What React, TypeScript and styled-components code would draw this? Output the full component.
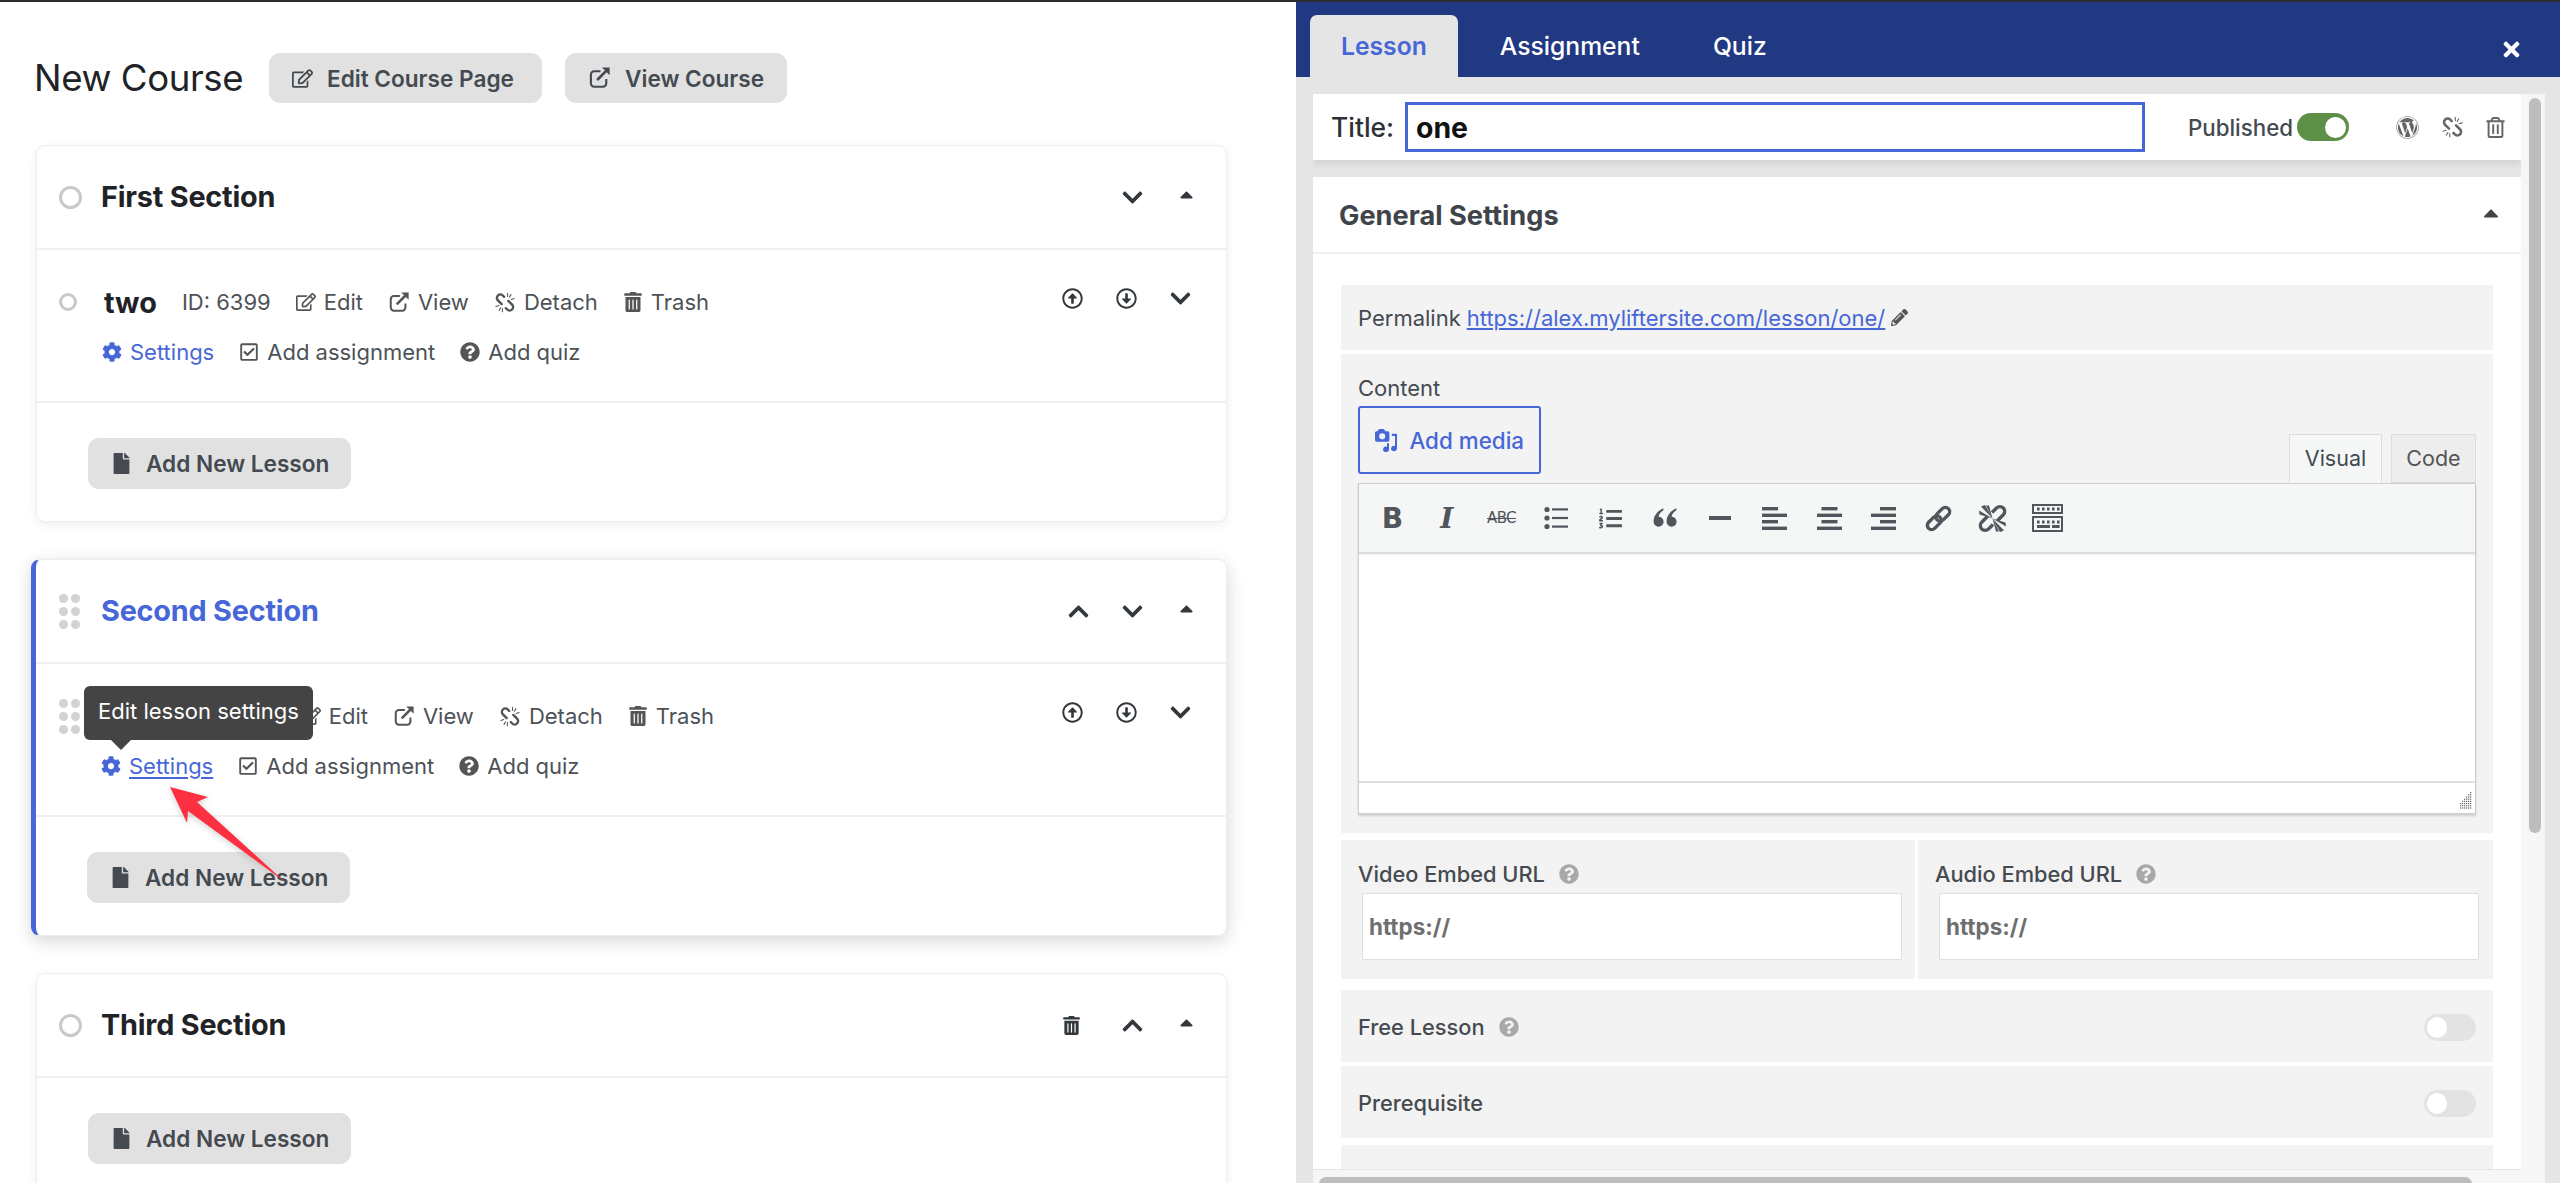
import React from "react";
import styled, { createGlobalStyle } from "styled-components";
import {
  FaRegEdit, FaTrashAlt, FaCog, FaRegCheckSquare, FaQuestionCircle, FaFile,
  FaRegArrowAltCircleUp, FaRegArrowAltCircleDown, FaChevronUp, FaChevronDown, FaCaretUp,
  FaTimes, FaWordpress, FaRegTrashAlt, FaPencilAlt, FaListOl,
} from "react-icons/fa";

const Blue = "#4767d8";
const Ink = "#444a50";

const Global = createGlobalStyle`
  html, body { margin: 0; padding: 0; background: #fff; }
  body { font-family: Inter, "Liberation Sans", sans-serif; color: ${Ink}; overflow: hidden; }
  * { box-sizing: border-box; }
`;

const Page = styled.div`
  display: flex;
  width: 2560px;
  height: 1183px;
  overflow: hidden;
  border-top: 2px solid #2b2d33;
`;

const LeftColumn = styled.main`
  width: 1296px;
  padding: 51px 69px 0 36px;
  background: #fff;
`;

const TopRow = styled.header`
  display: flex;
  align-items: center;
  height: 50px;
  margin-bottom: 42px;
`;

const PageTitle = styled.h1`
  flex: none;
  width: 235px;
  margin: 0 0 0 -2px;
  font-size: 36.6px;
  font-weight: 400;
  letter-spacing: -0.4px;
  color: #1f2328;
  white-space: nowrap;
`;

const GreyButton = styled.button<{ $w: number; $h?: number }>`
  display: inline-flex;
  align-items: center;
  gap: 14px;
  width: ${(p) => p.$w}px;
  height: ${(p) => p.$h ?? 50}px;
  padding: 0 23px;
  margin-right: 23px;
  border: 0;
  border-radius: 11px;
  background: #e1e1e1;
  color: ${Ink};
  font: 600 22.6px Inter, sans-serif;
  white-space: nowrap;
  svg { flex: none; font-size: 21px; }
`;

const Card = styled.section<{ $active?: boolean }>`
  position: relative;
  margin-bottom: 37px;
  margin-left: ${(p) => (p.$active ? "-5px" : "0")};
  border: 1px solid #eeeeee;
  border-left: ${(p) => (p.$active ? `5px solid ${Blue}` : "1px solid #eeeeee")};
  border-radius: 9px;
  background: #fff;
  box-shadow: ${(p) => (p.$active ? "0 5px 18px rgba(0,0,0,.16)" : "0 3px 10px rgba(0,0,0,.07)")};
`;

const SectionHead = styled.div`
  display: flex;
  align-items: center;
  height: 104px;
  padding: 0 13px 0 22px;
  border-bottom: 2px solid #f0f0f0;
`;

const Ring = styled.span<{ $size: number }>`
  flex: none;
  width: ${(p) => p.$size}px;
  height: ${(p) => p.$size}px;
  border: 3px solid #c9c9c9;
  border-radius: 50%;
`;

const Dots = styled.span`
  flex: none;
  display: grid;
  grid-template-columns: 9px 9px;
  gap: 4px 3px;
  margin: 0 2px 0 1px;
  i { width: 9px; height: 9px; border-radius: 50%; background: #d2d2d2; }
`;

const SectionTitle = styled.h2<{ $blue?: boolean }>`
  margin: -2px 0 0 19px;
  font-size: 28.8px;
  font-weight: 700;
  letter-spacing: -0.2px;
  color: ${(p) => (p.$blue ? Blue : "#1f2328")};
`;

const Spacer = styled.span`
  flex: 1;
`;

const IconSlot = styled.span<{ $size?: number; $color?: string; $w?: number }>`
  flex: none;
  display: flex;
  align-items: center;
  justify-content: center;
  width: ${(p) => p.$w ?? 54}px;
  font-size: ${(p) => p.$size ?? 21}px;
  color: ${(p) => p.$color ?? "#33383d"};
`;

const Caret = styled(FaCaretUp)`
  margin-top: -5px;
`;

const LessonBlock = styled.div`
  position: relative;
  height: 153px;
  padding: 37px 19px 0 22px;
  border-bottom: 2px solid #f0f0f0;
`;

const LessonRow = styled.div`
  display: flex;
  align-items: center;
  height: 30px;
`;

const LessonName = styled.strong`
  margin: 0 25px 0 27px;
  font-size: 28.8px;
  font-weight: 700;
  color: #1f2328;
`;

const MetaText = styled.span`
  margin-right: 25px;
  font-size: 22px;
  color: #4d5257;
  white-space: nowrap;
`;

const ActionLink = styled.a<{ $blue?: boolean; $under?: boolean }>`
  display: inline-flex;
  align-items: center;
  gap: 8px;
  margin-right: 25px;
  font-size: 22px;
  color: ${(p) => (p.$blue ? Blue : "#4d5257")};
  white-space: nowrap;
  svg { flex: none; font-size: 20px; color: ${(p) => (p.$blue ? Blue : "#555")}; }
  span { text-decoration: ${(p) => (p.$under ? "underline" : "none")}; text-underline-offset: 3px; }
`;

const SubRow = styled(LessonRow)`
  margin-top: 20px;
  padding-left: 43px;
`;

const RowIcons = styled.div`
  display: flex;
  margin-top: -8px;
`;

const CardFoot = styled.div`
  height: 118px;
  padding: 35px 0 0 51px;
`;

const Tooltip = styled.div`
  position: absolute;
  top: 22px;
  left: 48px;
  width: 229px;
  height: 54px;
  border-radius: 6px;
  background: #444444;
  color: #fff;
  font-size: 22px;
  line-height: 50px;
  text-align: center;
  white-space: nowrap;
  &::after {
    content: "";
    position: absolute;
    left: 27px;
    top: 54px;
    border: 10px solid transparent;
    border-top-color: #444444;
    border-bottom: 0;
  }
`;

const ArrowMark = styled.svg`
  position: absolute;
  left: 64px;
  top: 200px;
  width: 200px;
  height: 140px;
  overflow: visible;
  filter: drop-shadow(0 2px 3px rgba(0,0,0,.18));
`;

const RightPanel = styled.aside`
  flex: 1;
  display: flex;
  flex-direction: column;
  background: #e5e5e5;
`;

const TabBar = styled.nav`
  flex: none;
  display: flex;
  align-items: flex-end;
  gap: 11px;
  height: 75px;
  padding: 0 37px 0 14px;
  background: #213982;
`;

const Tab = styled.div<{ $on?: boolean }>`
  height: 62px;
  padding: 0 31px;
  border-radius: 7px 7px 0 0;
  background: ${(p) => (p.$on ? "#e5e5e5" : "transparent")};
  color: ${(p) => (p.$on ? Blue : "#fff")};
  font-size: 24.7px;
  font-weight: ${(p) => (p.$on ? 600 : 500)};
  line-height: 62px;
`;

const CloseButton = styled.span`
  margin-left: auto;
  align-self: center;
  display: flex;
  margin-top: 20px;
  color: #fff;
  font-size: 23px;
`;

const PanelBody = styled.div`
  flex: 1;
  display: grid;
  grid-template-columns: 1208px 24px;
  grid-template-rows: 1075px 14px;
  padding: 17px 0 0 17px;
  min-height: 0;
`;

const MainStack = styled.div`
  overflow: hidden;
`;

const TitleBar = styled.div`
  display: flex;
  align-items: center;
  height: 66px;
  padding: 0 12px 0 18px;
  background: #fff;
  box-shadow: 0 3px 8px rgba(0,0,0,.1);
`;

const TitleLabel = styled.label`
  flex: none;
  width: 74px;
  font-size: 26.4px;
  font-weight: 500;
  color: #2d3136;
`;

const TitleInput = styled.input`
  flex: none;
  width: 740px;
  height: 50px;
  padding: 0 8px;
  border: 3px solid ${Blue};
  outline: 0;
  background: #fff;
  font: 700 28.4px Inter, sans-serif;
  color: #111;
`;

const PublishedLabel = styled.span`
  margin-left: 43px;
  margin-right: 4px;
  font-size: 22.3px;
  font-weight: 500;
`;

const Toggle = styled.span<{ $on?: boolean }>`
  flex: none;
  display: flex;
  align-items: center;
  justify-content: ${(p) => (p.$on ? "flex-end" : "flex-start")};
  width: 52px;
  height: ${(p) => (p.$on ? 28 : 27)}px;
  padding: 3px;
  border-radius: 14px;
  background: ${(p) => (p.$on ? "#5d8f47" : "#e3e3e3")};
  i { display: block; height: 21px; width: ${(p) => (p.$on ? 21 : 20)}px; border-radius: 50%; background: #fff; }
`;

const TitleIcons = styled.div`
  display: flex;
  align-items: center;
  margin-left: auto;
  color: #666;
`;

const Settings = styled.div`
  height: 992px;
  margin-top: 17px;
  background: #fff;
`;

const SettingsHead = styled.div`
  display: flex;
  align-items: center;
  justify-content: space-between;
  height: 77px;
  padding: 2px 18px 0 26px;
  border-bottom: 2px solid #efefef;
  font-size: 27.2px;
  font-weight: 700;
  color: #3f444a;
  svg { font-size: 24px; color: #444; }
`;

const SettingsRows = styled.div`
  padding: 31px 28px 0;
`;

const Row = styled.div<{ $h: number; $top?: number }>`
  height: ${(p) => p.$h}px;
  margin-top: ${(p) => p.$top ?? 0}px;
  background: #f3f3f3;
`;

const PermalinkRow = styled(Row)`
  display: flex;
  align-items: center;
  gap: 6px;
  padding: 0 17px;
  font-size: 22px;
  a { color: ${Blue}; text-decoration: underline; text-underline-offset: 2px; }
  svg { font-size: 17px; color: #555; }
`;

const ContentRow = styled(Row)`
  padding: 21px 17px 0;
  font-size: 22px;
`;

const EditorTop = styled.div`
  display: flex;
  align-items: flex-end;
  justify-content: space-between;
  height: 68px;
  margin-top: 5px;
`;

const MediaButton = styled.button`
  display: inline-flex;
  align-items: center;
  gap: 12px;
  width: 183px;
  height: 68px;
  padding: 0 15px;
  border: 2px solid ${Blue};
  border-radius: 3px;
  background: transparent;
  color: ${Blue};
  font: 500 22.4px Inter, sans-serif;
  white-space: nowrap;
`;

const ModeTabs = styled.div`
  display: flex;
  gap: 9px;
  margin-bottom: -9px;
  position: relative;
  z-index: 1;
`;

const ModeTab = styled.span<{ $on?: boolean; $w: number }>`
  width: ${(p) => p.$w}px;
  height: 49px;
  border: 1px solid #dcdcdc;
  border-bottom: ${(p) => (p.$on ? "1px solid #f5f7f7" : "1px solid #dcdcdc")};
  background: ${(p) => (p.$on ? "#f5f7f7" : "#ededed")};
  font-size: 21.5px;
  line-height: 47px;
  text-align: center;
  color: ${(p) => (p.$on ? Ink : "#555")};
`;

const Editor = styled.div`
  margin-top: 9px;
  border: 1px solid #cfcfcf;
  background: #fff;
  box-shadow: 0 2px 2px rgba(0,0,0,.15);
`;

const Toolbar = styled.div`
  display: flex;
  align-items: center;
  height: 70px;
  padding-left: 6px;
  background: #f5f7f7;
  border-bottom: 2px solid #dddddd;
  box-shadow: 0 1px 2px rgba(0,0,0,.08);
`;

const ToolButton = styled.span`
  flex: none;
  display: flex;
  align-items: center;
  justify-content: center;
  width: 54.6px;
  color: #50565c;
  font-size: 23px;
`;

const BoldGlyph = styled.b`
  font: 700 28px "DejaVu Sans", sans-serif;
`;
const ItalicGlyph = styled.i`
  font: italic 700 28px "DejaVu Serif", serif;
`;
const StrikeGlyph = styled.s`
  font: 400 15px "DejaVu Sans", sans-serif;
  letter-spacing: -0.6px;
`;

const EditArea = styled.div`
  height: 229px;
  border-bottom: 2px solid #dfdfdf;
`;

const StatusBar = styled.div`
  display: flex;
  align-items: flex-end;
  justify-content: flex-end;
  height: 30px;
  padding: 0 3px 4px 0;
`;

const SplitRow = styled.div`
  display: grid;
  grid-template-columns: 574px 575px;
  gap: 3px;
  margin-top: 7px;
`;

const EmbedCell = styled.div`
  height: 139px;
  padding: 22px 14px 0 17px;
  background: #f3f3f3;
`;

const FieldLabel = styled.div`
  display: flex;
  align-items: center;
  gap: 14px;
  height: 24px;
  font-size: 21.8px;
  font-weight: 500;
  color: #454a50;
  svg { font-size: 20px; color: #a8a8a8; }
`;

const UrlInput = styled.input`
  display: block;
  width: 540px;
  height: 67px;
  margin: 7px 0 0 4px;
  padding: 0 6px;
  border: 1px solid #dedede;
  border-radius: 2px;
  background: #fff;
  outline: 0;
  font: 700 22.4px Inter, sans-serif;
  color: #6f6f6f;
`;

const SwitchRow = styled(Row)`
  display: flex;
  align-items: center;
  justify-content: space-between;
  padding: 2px 17px 0;
`;

const HScrollTrack = styled.div`
  grid-column: 1 / 2;
  padding: 7px 49px 0 6px;
  background: #f6f6f6;
  border-top: 1px solid #e4e4e4;
`;

const HThumb = styled.div`
  height: 7px;
  border-radius: 7px 7px 0 0;
  background: #bdbdbd;
`;

const VScrollTrack = styled.div`
  grid-row: 1 / 3;
  grid-column: 2;
  padding: 4px 4px 0 8px;
  background: #f6f6f6;
`;

const VThumb = styled.div`
  height: 735px;
  border-radius: 6px;
  background: #bdbdbd;
`;

/* Font Awesome 4 style outline link-out icon */
function LinkOut() {
  return (
    <svg width="1.1em" height="1.1em" viewBox="0 0 24 24" fill="none" stroke="currentColor" strokeWidth="2.2">
      <path d="M13 5.5H6.5a3.5 3.5 0 0 0-3.5 3.5v9a3.5 3.5 0 0 0 3.5 3.5h9a3.5 3.5 0 0 0 3.5-3.5v-4.5" />
      <path d="M9.5 14.5 21 3" strokeWidth="2.8" />
      <path d="M14.5 1.5h8v8z" fill="currentColor" stroke="none" />
    </svg>
  );
}

/* chain-broken: the two halves run top-left to bottom-right, sparks on the other diagonal */
function ChainBroken() {
  return (
    <svg width="1.1em" height="1.05em" viewBox="0 0 24 24" fill="none" stroke="currentColor" strokeLinecap="round">
      <path d="M11 5.5 9.5 4a4 4 0 0 0-5.6 0 4 4 0 0 0 0 5.6l4.3 4.2" strokeWidth="2.8" />
      <path d="M13 18.5l1.5 1.5a4 4 0 0 0 5.6 0 4 4 0 0 0 0-5.6l-4.3-4.2" strokeWidth="2.8" />
      <path d="M15 1.5v3.5M18.8 3 17 6M22.5 7.5l-3.5 1M9 22.5V19M5.2 21 7 18M1.5 16.5l3.5-1" strokeWidth="1.2" />
    </svg>
  );
}

function EditorLink() {
  return (
    <svg width="29" height="29" viewBox="0 0 29 29" fill="none" stroke="currentColor" strokeWidth="3.4">
      <g transform="rotate(-45 14.5 14.5)">
        <rect x="0.5" y="10.2" width="16" height="8.6" rx="4.3" />
        <rect x="12.5" y="10.2" width="16" height="8.6" rx="4.3" />
      </g>
    </svg>
  );
}

function EditorUnlink() {
  return (
    <svg width="29" height="29" viewBox="0 0 29 29" fill="none" stroke="currentColor">
      <path d="M14 8.5 18.5 4a5 5 0 0 1 6.8 0 5 5 0 0 1 0 6.8l-6 6" strokeWidth="3.4" />
      <path d="M15 20.5 10.5 25a5 5 0 0 1-6.8 0 5 5 0 0 1 0-6.8l6-6" strokeWidth="3.4" />
      <path d="M14.5 14.5 3 2.5 7 1zM14.5 14.5 1 6.5l.5 4zM14.5 14.5 8 1.5l3 0zM14.5 14.5 26 26.5l-4 1.5zM14.5 14.5 28 22.5l-.5-4zM14.5 14.5l6.5 13-3 0z" fill="currentColor" stroke="none" />
    </svg>
  );
}

function QuoteMark() {
  return (
    <svg width="26" height="23" viewBox="0 0 24 21" fill="currentColor">
      <path d="M10.5 1C5.5 3.5 1.5 7 1.5 13.5a4.6 4.6 0 1 0 4.6-4.6c.3-2.6 2.2-4.8 4.4-6zM22.5 1c-5 2.5-9 6-9 12.5a4.6 4.6 0 1 0 4.6-4.6c.3-2.6 2.2-4.8 4.4-6z" />
    </svg>
  );
}

function DragDots() {
  return (
    <Dots>
      <i /><i /><i /><i /><i /><i />
    </Dots>
  );
}

function Lesson({ dragging }: { dragging?: boolean }) {
  return (
    <LessonBlock>
      <LessonRow>
        {dragging ? <DragDots /> : <Ring $size={18} />}
        <LessonName>two</LessonName>
        <MetaText>ID: 6399</MetaText>
        <ActionLink><FaRegEdit /><span>Edit</span></ActionLink>
        <ActionLink><LinkOut /><span>View</span></ActionLink>
        <ActionLink><ChainBroken /><span>Detach</span></ActionLink>
        <ActionLink><FaTrashAlt /><span>Trash</span></ActionLink>
        <Spacer />
        <RowIcons>
          <IconSlot><FaRegArrowAltCircleUp /></IconSlot>
          <IconSlot><FaRegArrowAltCircleDown /></IconSlot>
          <IconSlot $size={23}><FaChevronDown /></IconSlot>
        </RowIcons>
      </LessonRow>
      <SubRow>
        <ActionLink $blue $under={dragging}><FaCog /><span>Settings</span></ActionLink>
        <ActionLink><FaRegCheckSquare /><span>Add assignment</span></ActionLink>
        <ActionLink><FaQuestionCircle /><span>Add quiz</span></ActionLink>
      </SubRow>
      {dragging && <Tooltip>Edit lesson settings</Tooltip>}
    </LessonBlock>
  );
}

function AddLesson() {
  return (
    <CardFoot>
      <GreyButton $w={263} $h={51}><FaFile />Add New Lesson</GreyButton>
    </CardFoot>
  );
}

function Bars({ align }: { align: "l" | "c" | "r" }) {
  const x = (w: number) => (align === "l" ? 0 : align === "c" ? (25 - w) / 2 : 25 - w);
  return (
    <svg width="25" height="25" viewBox="0 0 25 25" fill="currentColor">
      <rect x={x(16)} y="1" width="16" height="3.4" />
      <rect x={x(25)} y="7.6" width="25" height="3.4" />
      <rect x={x(16)} y="14" width="16" height="3.4" />
      <rect x={x(25)} y="20.6" width="25" height="3.4" />
    </svg>
  );
}

function BulletList() {
  return (
    <svg width="24" height="24" viewBox="0 0 24 24" fill="currentColor">
      <circle cx="3" cy="3.5" r="2.6" /><rect x="8" y="2.3" width="16" height="2.2" />
      <circle cx="3" cy="12" r="2.6" /><rect x="8" y="10.9" width="16" height="2.2" />
      <circle cx="3" cy="20.5" r="2.6" /><rect x="8" y="19.5" width="16" height="2.2" />
    </svg>
  );
}

function KitchenSink() {
  const cells = (y: number) =>
    [5, 10, 15, 20, 25].map((x) => <rect key={`${x}-${y}`} x={x} y={y} width="2.6" height="3" />);
  return (
    <svg width="31" height="28" viewBox="0 0 31 28" fill="currentColor">
      <path fillRule="evenodd" d="M0 0h31v10H0zM2 2v6h27V2z" />
      <path fillRule="evenodd" d="M0 12h31v16H0zM2 14v12h27V14z" />
      {cells(3.5)}
      {cells(16.5)}
      <rect x="5" y="21" width="13" height="3" />
      <rect x="20" y="21" width="7.6" height="3" />
    </svg>
  );
}

function MediaIcon() {
  return (
    <svg width="28" height="29" viewBox="0 0 28 29" fill={Blue}>
      <path fillRule="evenodd" d="M5 0h6l2 3h3A2 2 0 0 1 18 5v9a2 2 0 0 1-2 2H2a2 2 0 0 1-2-2V5a2 2 0 0 1 2-2h1zM9 5.5a3.8 3.8 0 1 0 0 7.6 3.8 3.8 0 0 0 0-7.6z" />
      <path d="M21 6h6.5v18.5a3.7 3.4 0 1 1-2.5-3.2V9H21z" />
      <path d="M15 18h2.5v7.5a3.7 3.4 0 1 1-2.5-3.2z" />
    </svg>
  );
}

function ResizeGrip() {
  const dots: React.ReactNode[] = [];
  [[10], [8, 10], [6, 8, 10], [4, 6, 8, 10], [2, 4, 6, 8, 10], [0, 2, 4, 6, 8, 10], [0, 2, 4, 6, 8, 10], [0, 2, 4, 6, 8, 10]].forEach((xs, r) =>
    xs.forEach((x) => dots.push(<rect key={`${r}-${x}`} x={x} y={r * 2.2} width="1.2" height="1.2" />))
  );
  return (
    <svg width="12" height="17" viewBox="0 0 12 17" fill="#666">
      {dots}
    </svg>
  );
}

export default function App() {
  return (
    <>
      <Global />
      <Page>
        <LeftColumn>
          <TopRow>
            <PageTitle>New Course</PageTitle>
            <GreyButton $w={273}><FaRegEdit />Edit Course Page</GreyButton>
            <GreyButton $w={222}><LinkOut />View Course</GreyButton>
          </TopRow>

          <Card>
            <SectionHead>
              <Ring $size={23} />
              <SectionTitle>First Section</SectionTitle>
              <Spacer />
              <IconSlot $size={23}><FaChevronDown /></IconSlot>
              <IconSlot><Caret /></IconSlot>
            </SectionHead>
            <Lesson />
            <AddLesson />
          </Card>

          <Card $active>
            <SectionHead>
              <DragDots />
              <SectionTitle $blue>Second Section</SectionTitle>
              <Spacer />
              <IconSlot $size={23}><FaChevronUp /></IconSlot>
              <IconSlot $size={23}><FaChevronDown /></IconSlot>
              <IconSlot><Caret /></IconSlot>
            </SectionHead>
            <Lesson dragging />
            <AddLesson />
            <ArrowMark viewBox="0 0 200 140">
              <polygon points="70,27 108,37 97,42 185,122 88,51 87,63" fill="#fc3040" />
            </ArrowMark>
          </Card>

          <Card>
            <SectionHead>
              <Ring $size={23} />
              <SectionTitle>Third Section</SectionTitle>
              <Spacer />
              <IconSlot $size={19} $w={68}><FaTrashAlt /></IconSlot>
              <IconSlot $size={23}><FaChevronUp /></IconSlot>
              <IconSlot><Caret /></IconSlot>
            </SectionHead>
            <AddLesson />
          </Card>
        </LeftColumn>

        <RightPanel>
          <TabBar>
            <Tab $on>Lesson</Tab>
            <Tab>Assignment</Tab>
            <Tab>Quiz</Tab>
            <CloseButton><FaTimes /></CloseButton>
          </TabBar>
          <PanelBody>
            <MainStack>
              <TitleBar>
                <TitleLabel>Title:</TitleLabel>
                <TitleInput defaultValue="one" />
                <PublishedLabel>Published</PublishedLabel>
                <Toggle $on><i /></Toggle>
                <TitleIcons>
                  <IconSlot $w={36} $size={23} $color="#666"><FaWordpress /></IconSlot>
                  <IconSlot $w={56} $color="#666"><ChainBroken /></IconSlot>
                  <IconSlot $w={28} $color="#666"><FaRegTrashAlt /></IconSlot>
                </TitleIcons>
              </TitleBar>
              <Settings>
                <SettingsHead>General Settings<Caret /></SettingsHead>
                <SettingsRows>
                  <PermalinkRow $h={65}>
                    Permalink <a>https://alex.myliftersite.com/lesson/one/</a>
                    <FaPencilAlt />
                  </PermalinkRow>
                  <ContentRow $h={479} $top={4}>
                    Content
                    <EditorTop>
                      <MediaButton><MediaIcon />Add media</MediaButton>
                      <ModeTabs>
                        <ModeTab $on $w={93}>Visual</ModeTab>
                        <ModeTab $w={85}>Code</ModeTab>
                      </ModeTabs>
                    </EditorTop>
                    <Editor>
                      <Toolbar>
                        <ToolButton><BoldGlyph>B</BoldGlyph></ToolButton>
                        <ToolButton><ItalicGlyph>I</ItalicGlyph></ToolButton>
                        <ToolButton><StrikeGlyph>ABC</StrikeGlyph></ToolButton>
                        <ToolButton><BulletList /></ToolButton>
                        <ToolButton><FaListOl /></ToolButton>
                        <ToolButton><QuoteMark /></ToolButton>
                        <ToolButton>
                          <svg width="22" height="4" viewBox="0 0 22 4" fill="currentColor"><rect width="22" height="4" /></svg>
                        </ToolButton>
                        <ToolButton><Bars align="l" /></ToolButton>
                        <ToolButton><Bars align="c" /></ToolButton>
                        <ToolButton><Bars align="r" /></ToolButton>
                        <ToolButton><EditorLink /></ToolButton>
                        <ToolButton><EditorUnlink /></ToolButton>
                        <ToolButton><KitchenSink /></ToolButton>
                      </Toolbar>
                      <EditArea />
                      <StatusBar><ResizeGrip /></StatusBar>
                    </Editor>
                  </ContentRow>
                  <SplitRow>
                    <EmbedCell>
                      <FieldLabel>Video Embed URL <FaQuestionCircle /></FieldLabel>
                      <UrlInput defaultValue="https://" />
                    </EmbedCell>
                    <EmbedCell>
                      <FieldLabel>Audio Embed URL <FaQuestionCircle /></FieldLabel>
                      <UrlInput defaultValue="https://" />
                    </EmbedCell>
                  </SplitRow>
                  <SwitchRow $h={72} $top={11}>
                    <FieldLabel>Free Lesson <FaQuestionCircle /></FieldLabel>
                    <Toggle><i /></Toggle>
                  </SwitchRow>
                  <SwitchRow $h={72} $top={4}>
                    <FieldLabel>Prerequisite</FieldLabel>
                    <Toggle><i /></Toggle>
                  </SwitchRow>
                  <Row $h={60} $top={7} />
                </SettingsRows>
              </Settings>
            </MainStack>
            <VScrollTrack><VThumb /></VScrollTrack>
            <HScrollTrack><HThumb /></HScrollTrack>
          </PanelBody>
        </RightPanel>
      </Page>
    </>
  );
}
